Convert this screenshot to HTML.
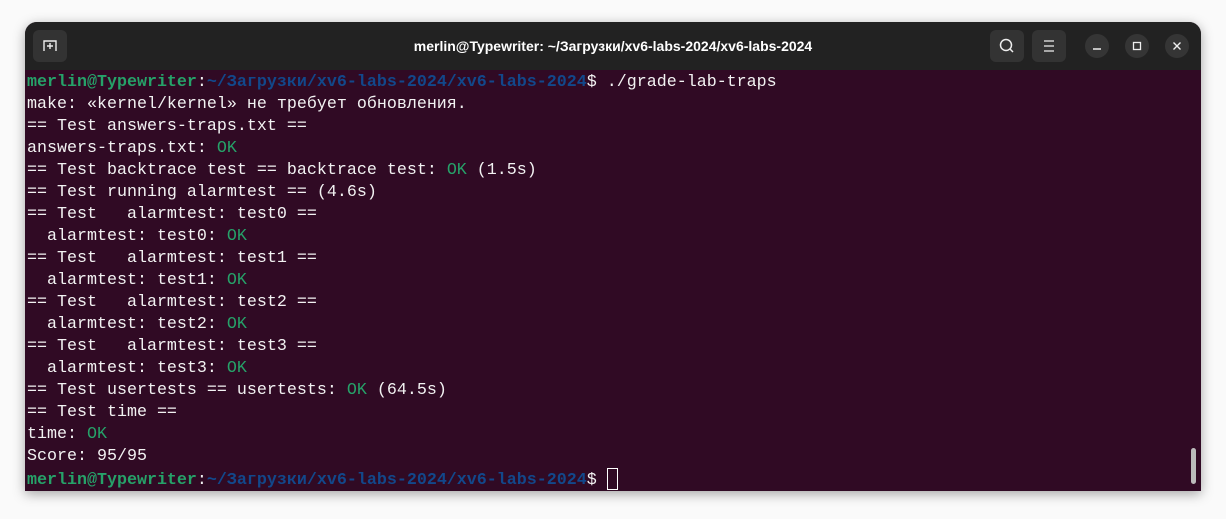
<!DOCTYPE html>
<html><head><meta charset="utf-8"><style>
body{margin:0;width:1226px;height:519px;background:#fafafa;position:relative;overflow:hidden}
.win{position:absolute;left:25px;top:22px;width:1176px;height:469px;border-radius:12px 12px 0 0;overflow:hidden;background:#300a24;box-shadow:0 3px 12px rgba(0,0,0,.35)}
.tb{position:absolute;left:0;top:0;width:100%;height:48px;background:#222;}
.title{position:absolute;left:0;right:0;top:0;text-align:center;color:#fff;font:bold 14px "Liberation Sans",sans-serif;line-height:48px}
.btn{position:absolute;top:8px;width:34px;height:32px;border-radius:6px;background:#333}
.cb{position:absolute;top:12px;width:24px;height:24px;border-radius:12px;background:#353535}
.term{position:absolute;left:2px;top:50px;font:16.67px/22px "Liberation Mono","DejaVu Sans Mono",monospace;color:#f2f2f2;white-space:pre}
.g{color:#26a269;font-weight:bold}.b{font-weight:bold;color:#12488b}.ok{color:#26a269}
.sb{position:absolute;left:1166px;top:426px;width:5px;height:36px;border-radius:3px;background:#bbb}
</style></head><body>
<div class="win">
<div class="tb">
<div class="title">merlin@Typewriter: ~/Загрузки/xv6-labs-2024/xv6-labs-2024</div>
<div class="btn" style="left:8px"><svg width="34" height="32"><path d="M11 21V11h12v10M17 13v6M14 16h6" stroke="#eee" stroke-width="1.4" fill="none"/></svg></div>
<div class="btn" style="left:965px"><svg width="34" height="32"><circle cx="16" cy="15" r="5.5" stroke="#eee" stroke-width="1.5" fill="none"/><path d="M20 19l3 3" stroke="#eee" stroke-width="1.5"/></svg></div>
<div class="btn" style="left:1007px"><svg width="34" height="32"><path d="M12 11h10M12 16h10M12 21h10" stroke="#eee" stroke-width="1.3"/></svg></div>
<div class="cb" style="left:1060px"><svg width="24" height="24"><path d="M8 15h8" stroke="#eee" stroke-width="1.4"/></svg></div>
<div class="cb" style="left:1100px"><svg width="24" height="24"><rect x="8.5" y="8.5" width="7" height="7" stroke="#eee" stroke-width="1.3" fill="none"/></svg></div>
<div class="cb" style="left:1140px"><svg width="24" height="24"><path d="M8.5 8.5l7 7M15.5 8.5l-7 7" stroke="#eee" stroke-width="1.4"/></svg></div>
</div>
<div class="term"><span class="g">merlin@Typewriter</span>:<span class="b">~/Загрузки/xv6-labs-2024/xv6-labs-2024</span>$ ./grade-lab-traps
make: «kernel/kernel» не требует обновления.
== Test answers-traps.txt ==
answers-traps.txt: <span class="ok">OK</span>
== Test backtrace test == backtrace test: <span class="ok">OK</span> (1.5s)
== Test running alarmtest == (4.6s)
== Test   alarmtest: test0 ==
  alarmtest: test0: <span class="ok">OK</span>
== Test   alarmtest: test1 ==
  alarmtest: test1: <span class="ok">OK</span>
== Test   alarmtest: test2 ==
  alarmtest: test2: <span class="ok">OK</span>
== Test   alarmtest: test3 ==
  alarmtest: test3: <span class="ok">OK</span>
== Test usertests == usertests: <span class="ok">OK</span> (64.5s)
== Test time ==
time: <span class="ok">OK</span>
Score: 95/95
<span class="g">merlin@Typewriter</span>:<span class="b">~/Загрузки/xv6-labs-2024/xv6-labs-2024</span>$ <span style="display:inline-block;width:9px;height:20px;border:1px solid #fff;vertical-align:-6px"></span></div>
<div class="sb"></div>
</div>
</body></html>
